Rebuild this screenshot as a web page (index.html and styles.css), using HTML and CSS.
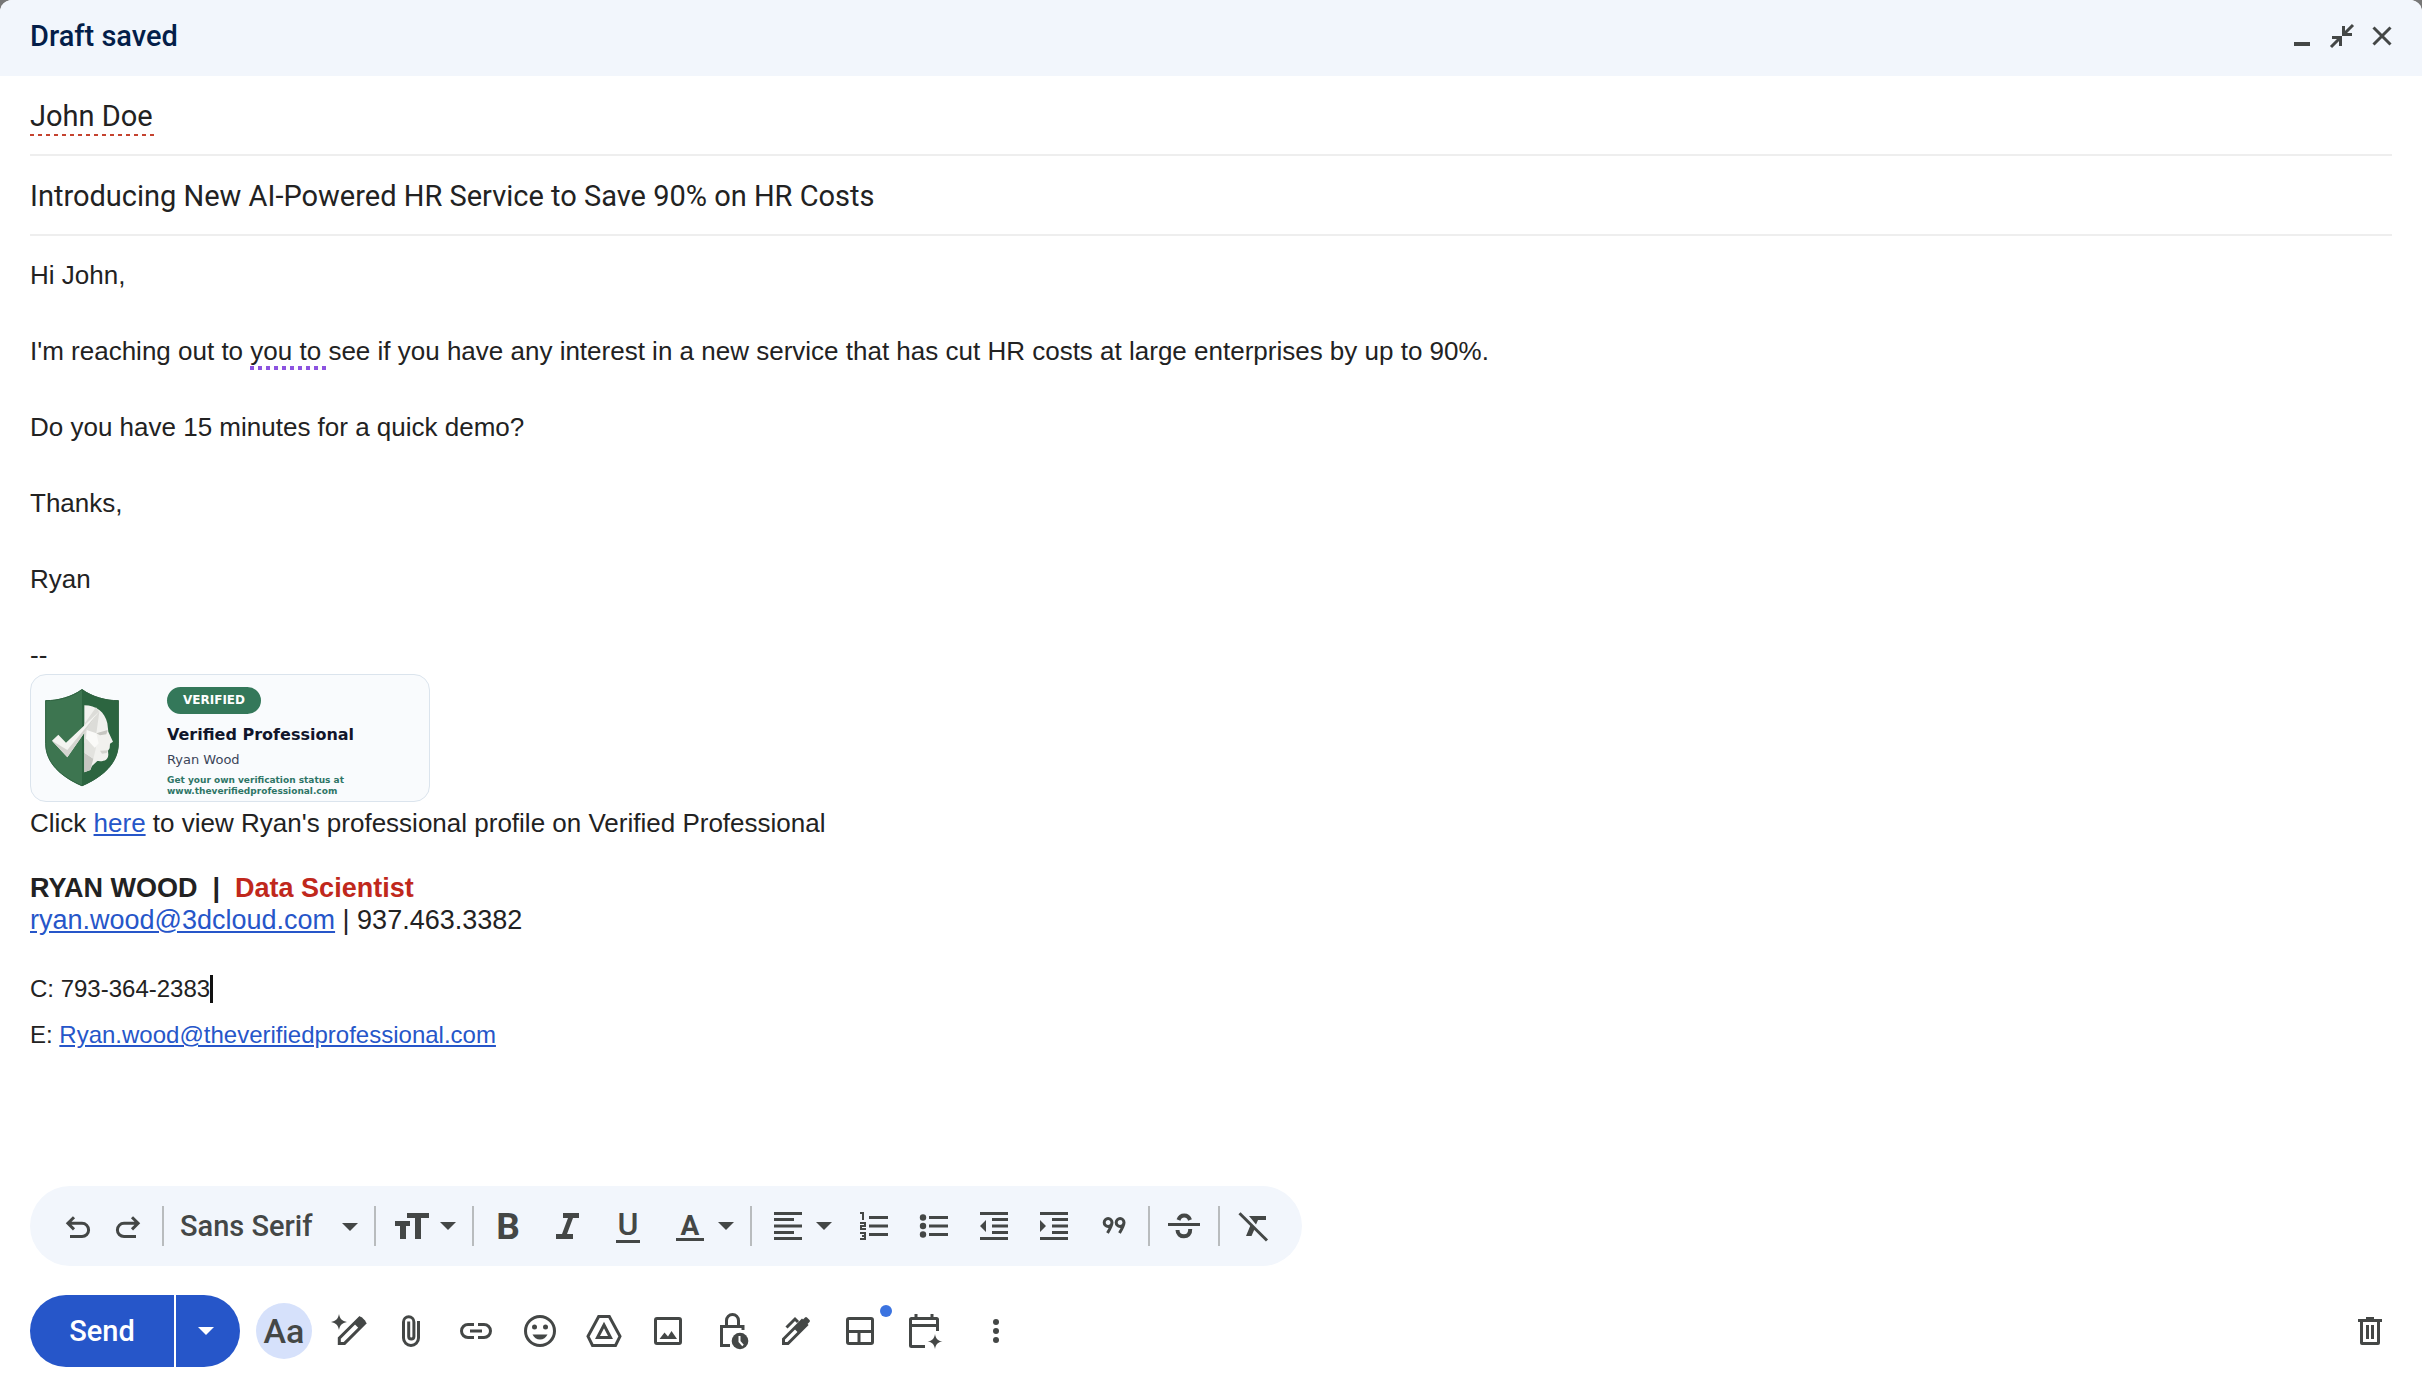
FILE: index.html
```html
<!DOCTYPE html>
<html lang="en">
<head>
    <meta charset="UTF-8">
    <meta name="viewport" content="width=device-width, initial-scale=1.0">
    <title>Draft saved</title>
    <link rel="stylesheet" href="styles.css">
</head>
<body>
<div class="compose">
    <header class="compose-header">
        <h1>Draft saved</h1>
        <div class="window-buttons">
            <button type="button" aria-label="Minimize"><svg class="icon" viewBox="0 0 40 40"><path d="M12 26h16v4H12z"/></svg></button>
            <button type="button" aria-label="Exit full screen"><svg class="icon" viewBox="0 0 40 40"><path class="line" d="M9 31l9-9M31 9l-9 9"/><path d="M10 20h10v10h-3v-7h-7zM20 10v10h10v-3h-7v-7z"/></svg></button>
            <button type="button" aria-label="Close"><svg class="icon" viewBox="0 0 40 40"><path class="line" d="M11.500 11.500l17 17M28.500 11.500l-17 17"/></svg></button>
        </div>
    </header>

    <div class="field">
        <input type="text" class="recipient" aria-label="To" value="John Doe" spellcheck="false">
    </div>
    <div class="field">
        <input type="text" class="subject" aria-label="Subject" value="Introducing New AI-Powered HR Service to Save 90% on HR Costs" spellcheck="false">
    </div>

    <main class="message">
        <p>Hi John,</p>
        <p>I'm reaching out to <span class="grammar">you to </span>see if you have any interest in a new service that has cut HR costs at large enterprises by up to 90%.</p>
        <p>Do you have 15 minutes for a quick demo?</p>
        <p>Thanks,</p>
        <p>Ryan</p>
        <div>--</div>
        <div class="badge-card">
            <svg class="shield" viewBox="0 0 282 342">
                <path fill="#3d7550" d="M138 27C106 50 66 61 28 61V190C28 250 76 292 138 319z"/>
                <path fill="#2c6540" d="M138 27C170 50 210 61 248 61V190C248 250 200 292 138 319z"/>
                <path fill="none" stroke="#2f6341" stroke-width="3" d="M138 29C106 52 66 62 29 62V190C29 250 76 290 138 317C200 290 247 250 247 190V62C210 62 170 52 138 29z"/>
                <path fill="#f1f1ee" d="M145 76C180 76 207 96 214 130L217 155L231 185L222 191L221 205L216 212L217 224C216 240 205 245 184 243L168 258L163 270L145 277z"/>
                <path fill="#dcdcd8" d="M145 132L180 82L190 96L181 160L145 190z"/>
                <path fill="#c6c6c1" d="M181 160L215 150L211 163L192 166zM145 218L172 236L163 270L145 277z"/>
                <path fill="#e3e3df" d="M145 166L180 203L172 236L145 218z"/>
                <path fill="#fafaf8" d="M152 150L181 160L188 190L176 203L150 175z"/>
                <path fill="#d3d3ce" d="M192 212l24-1-4 8-14 2z"/>
                <path fill="#f4f4f1" d="M48 182L67 164L90 188L190 94L94 232z"/>
                <path fill="#d5d5d0" d="M48 182L94 210V232zM94 210L190 94L94 232z"/>
            </svg>
            <div class="badge-text">
                <span class="pill">VERIFIED</span>
                <strong class="badge-title">Verified Professional</strong>
                <span class="badge-name">Ryan Wood</span>
                <span class="badge-note">Get your own verification status at<br>www.theverifiedprofessional.com</span>
            </div>
        </div>
        <div>Click <a href="#">here</a> to view Ryan's professional profile on Verified Professional</div>
        <div class="signature">
            <strong>RYAN WOOD &nbsp;|&nbsp; <span class="role">Data Scientist</span></strong><br>
            <a href="#">ryan.wood@3dcloud.com</a> | 937.463.3382
        </div>
        <div class="contact">
            C: 793-364-2383<span class="caret"></span><br>
            E: <a href="#">Ryan.wood@theverifiedprofessional.com</a>
        </div>
    </main>

    <div class="format-bar">
        <div class="history">
            <button type="button" aria-label="Undo"><svg class="icon" viewBox="0 0 40 40"><path class="line" d="M12 30.500h12a6.600 6.600 0 0 0 0-13.200H10M16 11.200l-6.100 6.100 6.100 6.100"/></svg></button>
            <button type="button" aria-label="Redo"><svg class="icon" viewBox="0 0 40 40"><path class="line" d="M28 30.500H16a6.600 6.600 0 0 1 0-13.200h14M24 11.200l6.100 6.100-6.100 6.100"/></svg></button>
        </div>
        <span class="sep"></span>
        <div class="font-picker">
            <select aria-label="Font"><option>Sans Serif</option></select>
            <svg class="arrow" viewBox="0 0 16 8"><path d="M0 0h16L8 8z"/></svg>
        </div>
        <span class="sep"></span>
        <button type="button" class="drop" aria-label="Size"><svg class="icon" viewBox="0 0 40 40"><path d="M15 7h22v5h-8v21h-6V12h-8zM3 15h15v5h-4v13H8V20H3z"/></svg><svg class="arrow" viewBox="0 0 16 8"><path d="M0 0h16L8 8z"/></svg></button>
        <span class="sep"></span>
        <button type="button" aria-label="Bold"><svg class="icon" viewBox="0 0 40 40"><text class="glyph" x="20" y="33" font-size="37">B</text></svg></button>
        <button type="button" aria-label="Italic"><svg class="icon" viewBox="0 0 40 40"><path d="M15 7h16v5h-6l-6 16h6v5H8v-5h6l6-16h-5z"/></svg></button>
        <button type="button" aria-label="Underline"><svg class="icon" viewBox="0 0 40 40"><text class="glyph medium" x="20" y="29" font-size="32">U</text><path d="M8 34h24v3H8z"/></svg></button>
        <button type="button" class="drop" aria-label="Text color"><svg class="icon" viewBox="0 0 40 40"><text class="glyph" x="20" y="29" font-size="28">A</text><path d="M6 32h28v3H6z"/></svg><svg class="arrow" viewBox="0 0 16 8"><path d="M0 0h16L8 8z"/></svg></button>
        <span class="sep"></span>
        <button type="button" class="drop" aria-label="Align"><svg class="icon" viewBox="0 0 40 40"><path d="M6 6h28v3H6zM6 12h20v3H6zM6 18.500h28v3H6zM6 25h20v3H6zM6 31h28v3H6z"/></svg><svg class="arrow" viewBox="0 0 16 8"><path d="M0 0h16L8 8z"/></svg></button>
        <button type="button" aria-label="Numbered list"><svg class="icon" viewBox="0 0 40 40"><path d="M15 10h19v3H15zM15 18.500h19v3H15zM15 27h19v3H15zM6 6h4v8H8V8H6zM6 16h6v5H8v1h4v2H6v-5h4v-1H6zM6 26h6v8H6v-2h4v-1H8v-2h2v-1H6z"/></svg></button>
        <button type="button" aria-label="Bulleted list"><svg class="icon" viewBox="0 0 40 40"><path d="M15 10h19v3H15zM15 18.500h19v3H15zM15 27h19v3H15z"/><circle cx="9" cy="11.500" r="3.200"/><circle cx="9" cy="20" r="3.200"/><circle cx="9" cy="28.500" r="3.200"/></svg></button>
        <button type="button" aria-label="Indent less"><svg class="icon" viewBox="0 0 40 40"><path d="M6 6h28v3H6zM18 12h16v3H18zM18 18.500h16v3H18zM18 25h16v3H18zM6 31h28v3H6zM6 20l6-6v12z"/></svg></button>
        <button type="button" aria-label="Indent more"><svg class="icon" viewBox="0 0 40 40"><path d="M6 6h28v3H6zM18 12h16v3H18zM18 18.500h16v3H18zM18 25h16v3H18zM6 31h28v3H6zM12 20l-6-6v12z"/></svg></button>
        <button type="button" aria-label="Quote"><svg class="icon" viewBox="0 0 40 40"><path class="line" d="M18 16.500a3.900 3.900 0 1 0-7.800 0a3.900 3.900 0 1 0 7.800 0c0 3-1.800 6-4.500 10.500M30 16.500a3.900 3.900 0 1 0-7.800 0a3.900 3.900 0 1 0 7.800 0c0 3-1.800 6-4.500 10.500"/></svg></button>
        <span class="sep"></span>
        <button type="button" aria-label="Strikethrough"><svg class="icon" viewBox="0 0 40 40"><path d="M4 17h32v3H4z"/><path class="line thick" d="M14.500 14c1-3 3-4.500 5.700-4.500s4.800 1.500 5.800 4.500M13.500 24c0 4 3 6.300 6.500 6.300s6.500-2.300 6.200-7.300"/></svg></button>
        <span class="sep"></span>
        <button type="button" aria-label="Remove formatting"><svg class="icon" viewBox="0 0 40 40"><path d="M15 10h17v4h-8l-2 4.500zM17 18l4 4-3.500 8H12z"/><path class="line" d="M5.500 7.300L33 34.500"/></svg></button>
    </div>

    <footer class="actions">
        <div class="send">
            <button type="button" class="send-main">Send</button>
            <button type="button" class="send-more" aria-label="More send options"><svg class="arrow" viewBox="0 0 16 8"><path d="M0 0h16L8 8z"/></svg></button>
        </div>
        <div class="tools">
            <button type="button" aria-label="Formatting options"><span class="format-toggle">Aa</span></button>
            <button type="button" aria-label="Help me write"><svg class="icon" viewBox="0 0 40 40"><path d="M11 3c1 5 3 7 8 8-5 1-7 3-8 8-1-5-3-7-8-8 5-1 7-3 8-8z"/><path class="line" d="M11.300 32.400v-5.200L31.500 7l5.200 5.200-20.200 20.200z"/><path d="M25.500 12L31 6.500q1.500-1.500 3 0l3 3q1.500 1.500 0 3L31.500 18z"/></svg></button>
            <button type="button" aria-label="Attach files"><svg class="icon" viewBox="0 0 40 40"><path class="line" d="M26.500 10v17a7.500 7.500 0 0 1-15 0V11a5.200 5.200 0 0 1 10.400 0v14.500a2.600 2.600 0 0 1-5.200 0V10.500"/></svg></button>
            <button type="button" aria-label="Insert link"><svg class="icon" viewBox="0 0 40 40"><path class="line" d="M18 13.500h-6a6.500 6.500 0 0 0 0 13h6M22 13.500h6a6.500 6.500 0 0 1 0 13h-6M14 20h12"/></svg></button>
            <button type="button" aria-label="Insert emoji"><svg class="icon" viewBox="0 0 40 40"><circle class="line" cx="20" cy="20" r="14.500"/><circle cx="14.500" cy="16" r="2.500"/><circle cx="25.500" cy="16" r="2.500"/><path d="M12.500 23.500h15c-1.500 3-4.200 5-7.500 5s-6-2-7.500-5z"/></svg></button>
            <button type="button" aria-label="Insert from Drive"><svg class="icon" viewBox="0 0 40 40"><path class="line" d="M14.700 5.500h10.600L36 25.300l-4.500 9.200h-23L4 25.300z"/><path class="line" d="M20 14l6.500 12.500h-13z"/></svg></button>
            <button type="button" aria-label="Insert photo"><svg class="icon" viewBox="0 0 40 40"><rect class="line" x="7.500" y="7.500" width="25" height="25" rx="1.500"/><path d="M11.500 28l5-6.500 3.500 4 3.500-5.500L29 28z"/></svg></button>
            <button type="button" aria-label="Confidential mode"><svg class="icon" viewBox="0 0 40 40"><path class="line" d="M18 34.500H9.500v-19h21.500V19M14.500 15V9.500a6 6 0 0 1 12 0V15"/><circle cx="28" cy="30" r="8.300"/><path fill="none" stroke="#fff" stroke-width="2" d="M27.500 25v5.500l3.500 4"/></svg></button>
            <button type="button" aria-label="Insert signature"><svg class="icon" viewBox="0 0 40 40"><path class="line" d="M7.500 32.500V28L26 9.500l4.500 4.500L12 32.500zM10.500 16.500l8.500-8.500 3 3"/><path d="M18 17.500L29 6.500q1-1 2 0l2.500 2.500q1 1 0 2L22.500 22z"/></svg></button>
            <button type="button" class="layouts" aria-label="Select a layout"><svg class="icon" viewBox="0 0 40 40"><rect class="line" x="7.500" y="7.500" width="25" height="25" rx="1.500"/><path class="line" d="M7 20.500h26M19 20.500V33"/></svg><span class="dot"></span></button>
            <button type="button" aria-label="Schedule"><svg class="icon" viewBox="0 0 40 40"><path class="line" d="M21 35.500H7.500q-1 0-1-1v-26q0-1 1-1h25q1 0 1 1V20M6.500 14.500h27M12 3v5M28 3v5"/><path d="M31 23c.8 4.800 2.700 6.700 7.500 7.500-4.800.8-6.700 2.700-7.500 7.500-.8-4.800-2.700-6.700-7.500-7.500 4.800-.8 6.700-2.700 7.500-7.500z"/></svg></button>
            <button type="button" class="more" aria-label="More options"><svg class="icon" viewBox="0 0 40 40"><circle cx="20" cy="11" r="3"/><circle cx="20" cy="20" r="3"/><circle cx="20" cy="29" r="3"/></svg></button>
        </div>
        <button type="button" class="discard" aria-label="Discard draft"><svg class="icon" viewBox="0 0 40 40"><path d="M8 8h8V6h8v2h8v3H8zM16 14h3v14h-3zM21 14h3v14h-3z"/><path class="line" d="M11.500 10v22q0 .5.500.5h16q.5 0 .5-.5V10"/></svg></button>
    </footer>
</div>
</body>
</html>
```
FILE: styles.css
```css
* {
    box-sizing: border-box;
}
body {
    margin: 0;
    background-color: #777;
    font-family: Roboto, Arial, sans-serif;
    color: #222;
}
button {
    display: flex;
    align-items: center;
    justify-content: center;
    padding: 0;
    border: 0;
    background: none;
    font-family: inherit;
    color: #444746;
    cursor: pointer;
}
.compose {
    display: flex;
    flex-direction: column;
    min-height: 100vh;
    background-color: #fff;
    border-radius: 12px 12px 0 0;
    overflow: hidden;
}

/* icons */
.icon {
    width: 40px;
    height: 40px;
    fill: #444746;
    overflow: visible;
}
.line {
    fill: none;
    stroke: #444746;
    stroke-width: 3;
}
.thick {
    stroke-width: 4;
}
.glyph {
    font-weight: 700;
    text-anchor: middle;
}
.medium {
    font-weight: 500;
}
.arrow {
    width: 16px;
    height: 8px;
    fill: currentColor;
}

/* header */
.compose-header {
    display: flex;
    align-items: center;
    justify-content: space-between;
    height: 76px;
    padding: 0 20px 4px 30px;
    background-color: #f2f6fc;
}
.compose-header h1 {
    margin: 0;
    font-size: 29px;
    font-weight: 500;
    color: #041e49;
}
.window-buttons {
    display: flex;
}

/* recipient and subject */
.field {
    margin: 0 30px;
    padding: 20px 0 18px;
    border-bottom: 2px solid #eee;
}
.field input {
    display: block;
    height: 40px;
    padding: 0;
    border: 0;
    outline: none;
    background: none;
    font-family: inherit;
    font-size: 29px;
    color: #222;
}
.field .recipient {
    width: 124px;
    background: repeating-linear-gradient(90deg, #c5432f 0 4px, transparent 4px 8px) bottom / 100% 2px no-repeat;
}
.field .subject {
    width: 100%;
}

/* message */
.message {
    flex: 1;
    padding: 20px 30px;
    font-family: Arial, "Liberation Sans", sans-serif;
    font-size: 26px;
    line-height: 38px;
}
.message p {
    margin: 0 0 38px;
}
.message a {
    color: #2656c9;
}
.grammar {
    padding-bottom: 4px;
    white-space: pre;
    background: repeating-linear-gradient(90deg, #8c53e0 0 4px, transparent 4px 8px) bottom / 100% 4px no-repeat;
}
.badge-card {
    display: flex;
    width: 400px;
    height: 128px;
    margin-bottom: 2px;
    padding: 5px;
    border: 1px solid #dbe4ed;
    border-radius: 16px;
    background-color: #f9fbfd;
    font-family: "DejaVu Sans", sans-serif;
}
.shield {
    width: 94px;
    height: 114px;
}
.badge-text {
    display: flex;
    flex-direction: column;
    align-items: flex-start;
    margin-left: 37px;
    padding-top: 7px;
    white-space: nowrap;
}
.pill {
    padding: 0 16px;
    border-radius: 14px;
    background-color: #34785a;
    font-size: 12px;
    font-weight: bold;
    line-height: 27px;
    color: #fff;
}
.badge-title {
    margin-top: 11px;
    font-size: 16px;
    line-height: 20px;
    color: #11162b;
}
.badge-name {
    margin-top: 6px;
    font-size: 13px;
    line-height: 18px;
    color: #3b4559;
}
.badge-note {
    margin-top: 6px;
    font-size: 9px;
    font-weight: bold;
    line-height: 11px;
    color: #2e7566;
}
.signature {
    margin-top: 30px;
    font-size: 27px;
    line-height: 32px;
}
.role {
    color: #c0281c;
}
.contact {
    margin-top: 30px;
    font-size: 24px;
    line-height: 46px;
}
.caret {
    display: inline-block;
    width: 3px;
    height: 28px;
    vertical-align: -6px;
    background-color: #111;
}

/* formatting toolbar */
.format-bar {
    display: flex;
    align-items: center;
    align-self: flex-start;
    height: 80px;
    margin-left: 30px;
    padding: 0 18px 0 23px;
    border-radius: 40px;
    background-color: #f2f6fc;
}
.format-bar button {
    width: 60px;
    height: 60px;
}
.history {
    display: flex;
    margin-right: 5px;
}
.format-bar .history button {
    width: 50px;
}
.format-bar .drop {
    width: 88px;
    gap: 8px;
}
.sep {
    width: 2px;
    height: 40px;
    margin: 0 4px;
    background-color: #b9bcbe;
}
.font-picker {
    position: relative;
    width: 202px;
}
.font-picker select {
    appearance: none;
    width: 100%;
    height: 40px;
    padding: 0 40px 0 12px;
    border: 0;
    background: none;
    font-family: inherit;
    font-size: 29px;
    font-weight: 500;
    color: #444746;
}
.font-picker .arrow {
    position: absolute;
    right: 12px;
    top: 17px;
    color: #444746;
    pointer-events: none;
}

/* bottom row */
.actions {
    display: flex;
    align-items: center;
    padding: 29px 20px 25px 30px;
}
.send {
    display: flex;
    gap: 2px;
    margin-right: 12px;
}
.send button {
    height: 72px;
    background-color: #2656c9;
    color: #fff;
}
.send .send-main {
    width: 144px;
    border-radius: 36px 0 0 36px;
    font-size: 29px;
    font-weight: 500;
}
.send .send-more {
    width: 64px;
    padding-right: 4px;
    border-radius: 0 36px 36px 0;
}
.tools {
    display: flex;
}
.tools button,
.discard {
    width: 64px;
    height: 64px;
}
.format-toggle {
    width: 56px;
    border-radius: 50%;
    background-color: #d6e1fb;
    font-size: 34px;
    font-weight: 500;
    line-height: 56px;
}
.layouts {
    position: relative;
}
.dot {
    position: absolute;
    top: 6px;
    right: 0;
    width: 12px;
    height: 12px;
    border-radius: 50%;
    background-color: #3b73e0;
}
.tools .more {
    margin-left: 8px;
}
.discard {
    margin-left: auto;
}
```
